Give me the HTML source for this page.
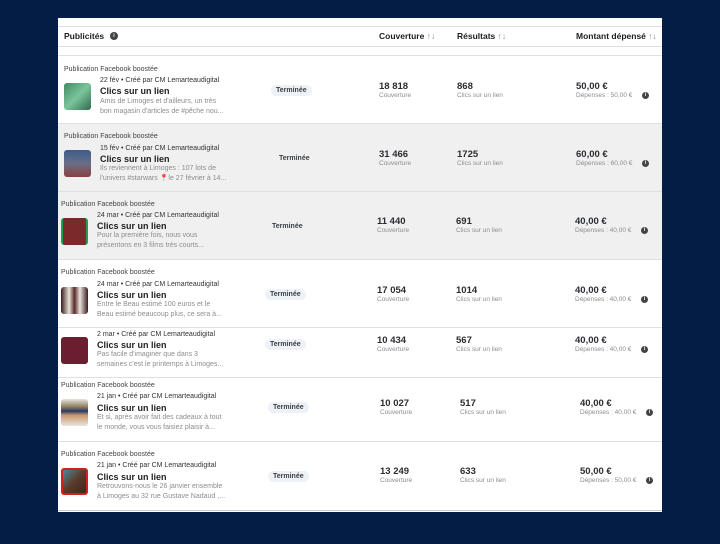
<!DOCTYPE html>
<html><head><meta charset="utf-8"><style>
*{margin:0;padding:0;box-sizing:border-box}
body{width:720px;height:544px;background:#031d45;font-family:"Liberation Sans",sans-serif;position:relative;overflow:hidden}
#p{position:absolute;left:58px;top:18px;width:604px;height:494px;background:#fff}
.a{position:absolute;white-space:nowrap}
.bg{position:absolute;left:58px;width:604px}
.pub{font-size:7px;color:#444}
.dt{font-size:7px;color:#333}
.tt{font-size:9px;color:#1c1e21;font-weight:bold}
.ds{font-size:7px;color:#8a8d91;line-height:10px}
.th{position:absolute;width:27px;height:27px;border-radius:3px}
.pill{font-size:7px;font-weight:bold;color:#3a3f47;padding:2px 5px;border-radius:8px}
.n{font-size:9.5px;font-weight:bold;color:#2a2d31}
.s{font-size:6.5px;color:#8a8d91}
.i{position:absolute;width:7px;height:7px;border-radius:50%;background:#444;color:#fff;font-size:5px;text-align:center;line-height:7px;font-weight:bold}
.hd{font-size:8.5px;font-weight:bold;color:#1c1e21}
.ln{position:absolute;left:58px;width:604px;height:1px;background:#dde0e4}
</style></head><body>
<div id="p"></div>
<div class="ln" style="top:26px"></div>
<div class="ln" style="top:46px"></div>
<div class="ln" style="top:55px"></div>
<div class="a hd" style="left:64px;top:31px">Publicités</div>
<div class="i" style="left:110px;top:32px;width:8px;height:8px;line-height:8px">i</div>
<div class="a hd" style="left:379px;top:31px">Couverture <span style="color:#888;font-weight:normal">↑↓</span></div>
<div class="a hd" style="left:457px;top:31px">Résultats <span style="color:#888;font-weight:normal">↑↓</span></div>
<div class="a hd" style="left:576px;top:31px">Montant dépensé <span style="color:#888;font-weight:normal">↑↓</span></div>

<div class="bg" style="top:124px;height:68px;background:#f0f0f0"></div>
<div class="bg" style="top:192px;height:67px;background:#f0f0f0"></div>
<div class="ln" style="top:123px"></div>
<div class="ln" style="top:191px"></div>
<div class="ln" style="top:259px"></div>
<div class="ln" style="top:327px"></div>
<div class="ln" style="top:377px"></div>
<div class="ln" style="top:441px"></div>
<div class="ln" style="top:510px;background:#c8ccd2"></div>

<div class="a pub" style="left:64px;top:66px">Publication Facebook boostée</div>
<div class="a dt" style="left:100px;top:77px">22 fév • Créé par CM Lemarteaudigital</div>
<div class="a tt" style="left:100px;top:86px">Clics sur un lien</div>
<div class="a ds" style="left:100px;top:97px">Amis de Limoges et d'ailleurs, un très<br>bon magasin d'articles de #pêche nou...</div>
<div class="th" style="left:64px;top:83px;background:linear-gradient(135deg,#3d8a63,#7cc59b,#2f6a50)"></div>
<div class="a pill" style="left:271px;top:85px;background:#eef1f6">Terminée</div>
<div class="a n" style="left:379px;top:81px">18 818</div><div class="a s" style="left:379px;top:92px">Couverture</div>
<div class="a n" style="left:457px;top:81px">868</div><div class="a s" style="left:457px;top:92px">Clics sur un lien</div>
<div class="a n" style="left:576px;top:81px">50,00 €</div><div class="a s" style="left:576px;top:92px">Dépenses : 50,00 €</div><div class="i" style="left:642px;top:92px">i</div>

<div class="a pub" style="left:64px;top:133px">Publication Facebook boostée</div>
<div class="a dt" style="left:100px;top:145px">15 fév • Créé par CM Lemarteaudigital</div>
<div class="a tt" style="left:100px;top:154px">Clics sur un lien</div>
<div class="a ds" style="left:100px;top:164px">Ils reviennent à Limoges : 107 lots de<br>l'univers #starwars 📍le 27 février à 14...</div>
<div class="th" style="left:64px;top:150px;background:linear-gradient(180deg,#3b5c8c,#6a6e86,#8a4040)"></div>
<div class="a pill" style="left:274px;top:153px">Terminée</div>
<div class="a n" style="left:379px;top:149px">31 466</div><div class="a s" style="left:379px;top:160px">Couverture</div>
<div class="a n" style="left:457px;top:149px">1725</div><div class="a s" style="left:457px;top:160px">Clics sur un lien</div>
<div class="a n" style="left:576px;top:149px">60,00 €</div><div class="a s" style="left:576px;top:160px">Dépenses : 60,00 €</div><div class="i" style="left:642px;top:160px">i</div>

<div class="a pub" style="left:61px;top:201px">Publication Facebook boostée</div>
<div class="a dt" style="left:97px;top:212px">24 mar • Créé par CM Lemarteaudigital</div>
<div class="a tt" style="left:97px;top:221px">Clics sur un lien</div>
<div class="a ds" style="left:97px;top:231px">Pour la première fois, nous vous<br>présentons en 3 films très courts...</div>
<div class="th" style="left:61px;top:218px;background:#7a2a2a;border-left:2px solid #2c9a4a;border-right:2px solid #2c9a4a"></div>
<div class="a pill" style="left:267px;top:221px">Terminée</div>
<div class="a n" style="left:377px;top:216px">11 440</div><div class="a s" style="left:377px;top:227px">Couverture</div>
<div class="a n" style="left:456px;top:216px">691</div><div class="a s" style="left:456px;top:227px">Clics sur un lien</div>
<div class="a n" style="left:575px;top:216px">40,00 €</div><div class="a s" style="left:575px;top:227px">Dépenses : 40,00 €</div><div class="i" style="left:641px;top:227px">i</div>

<div class="a pub" style="left:61px;top:269px">Publication Facebook boostée</div>
<div class="a dt" style="left:97px;top:281px">24 mar • Créé par CM Lemarteaudigital</div>
<div class="a tt" style="left:97px;top:290px">Clics sur un lien</div>
<div class="a ds" style="left:97px;top:300px">Entre le Beau estimé 100 euros et le<br>Beau estimé beaucoup plus, ce sera à...</div>
<div class="th" style="left:61px;top:287px;background:linear-gradient(90deg,#3a1a1a,#e8e4dc 30%,#5a2a2a 50%,#e8e4dc 70%,#3a1a1a)"></div>
<div class="a pill" style="left:265px;top:289px;background:#eef1f6">Terminée</div>
<div class="a n" style="left:377px;top:285px">17 054</div><div class="a s" style="left:377px;top:296px">Couverture</div>
<div class="a n" style="left:456px;top:285px">1014</div><div class="a s" style="left:456px;top:296px">Clics sur un lien</div>
<div class="a n" style="left:575px;top:285px">40,00 €</div><div class="a s" style="left:575px;top:296px">Dépenses : 40,00 €</div><div class="i" style="left:641px;top:296px">i</div>

<div class="a dt" style="left:97px;top:331px">2 mar • Créé par CM Lemarteaudigital</div>
<div class="a tt" style="left:97px;top:340px">Clics sur un lien</div>
<div class="a ds" style="left:97px;top:350px">Pas facile d'imaginer que dans 3<br>semaines c'est le printemps à Limoges...</div>
<div class="th" style="left:61px;top:337px;background:#6a1e30"></div>
<div class="a pill" style="left:265px;top:339px;background:#eef1f6">Terminée</div>
<div class="a n" style="left:377px;top:335px">10 434</div><div class="a s" style="left:377px;top:346px">Couverture</div>
<div class="a n" style="left:456px;top:335px">567</div><div class="a s" style="left:456px;top:346px">Clics sur un lien</div>
<div class="a n" style="left:575px;top:335px">40,00 €</div><div class="a s" style="left:575px;top:346px">Dépenses : 40,00 €</div><div class="i" style="left:641px;top:346px">i</div>

<div class="a pub" style="left:61px;top:382px">Publication Facebook boostée</div>
<div class="a dt" style="left:97px;top:393px">21 jan • Créé par CM Lemarteaudigital</div>
<div class="a tt" style="left:97px;top:403px">Clics sur un lien</div>
<div class="a ds" style="left:97px;top:413px">Et si, après avoir fait des cadeaux à tout<br>le monde, vous vous faisiez plaisir à...</div>
<div class="th" style="left:61px;top:399px;background:linear-gradient(180deg,#e8e4dc,#8a7a5a 30%,#2a3a6a 45%,#c89a6a 60%,#e8e4dc)"></div>
<div class="a pill" style="left:268px;top:402px;background:#eef1f6">Terminée</div>
<div class="a n" style="left:380px;top:398px">10 027</div><div class="a s" style="left:380px;top:409px">Couverture</div>
<div class="a n" style="left:460px;top:398px">517</div><div class="a s" style="left:460px;top:409px">Clics sur un lien</div>
<div class="a n" style="left:580px;top:398px">40,00 €</div><div class="a s" style="left:580px;top:409px">Dépenses : 40,00 €</div><div class="i" style="left:646px;top:409px">i</div>

<div class="a pub" style="left:61px;top:451px">Publication Facebook boostée</div>
<div class="a dt" style="left:97px;top:462px">21 jan • Créé par CM Lemarteaudigital</div>
<div class="a tt" style="left:97px;top:472px">Clics sur un lien</div>
<div class="a ds" style="left:97px;top:482px">Retrouvons-nous le 26 janvier ensemble<br>à Limoges au 32 rue Gustave Nadaud ,...</div>
<div class="th" style="left:61px;top:468px;background:linear-gradient(135deg,#4a8a9a,#5a3a2a,#3a2a1a);border:2px solid #d02020"></div>
<div class="a pill" style="left:268px;top:471px;background:#eef1f6">Terminée</div>
<div class="a n" style="left:380px;top:466px">13 249</div><div class="a s" style="left:380px;top:477px">Couverture</div>
<div class="a n" style="left:460px;top:466px">633</div><div class="a s" style="left:460px;top:477px">Clics sur un lien</div>
<div class="a n" style="left:580px;top:466px">50,00 €</div><div class="a s" style="left:580px;top:477px">Dépenses : 50,00 €</div><div class="i" style="left:646px;top:477px">i</div>
</body></html>
